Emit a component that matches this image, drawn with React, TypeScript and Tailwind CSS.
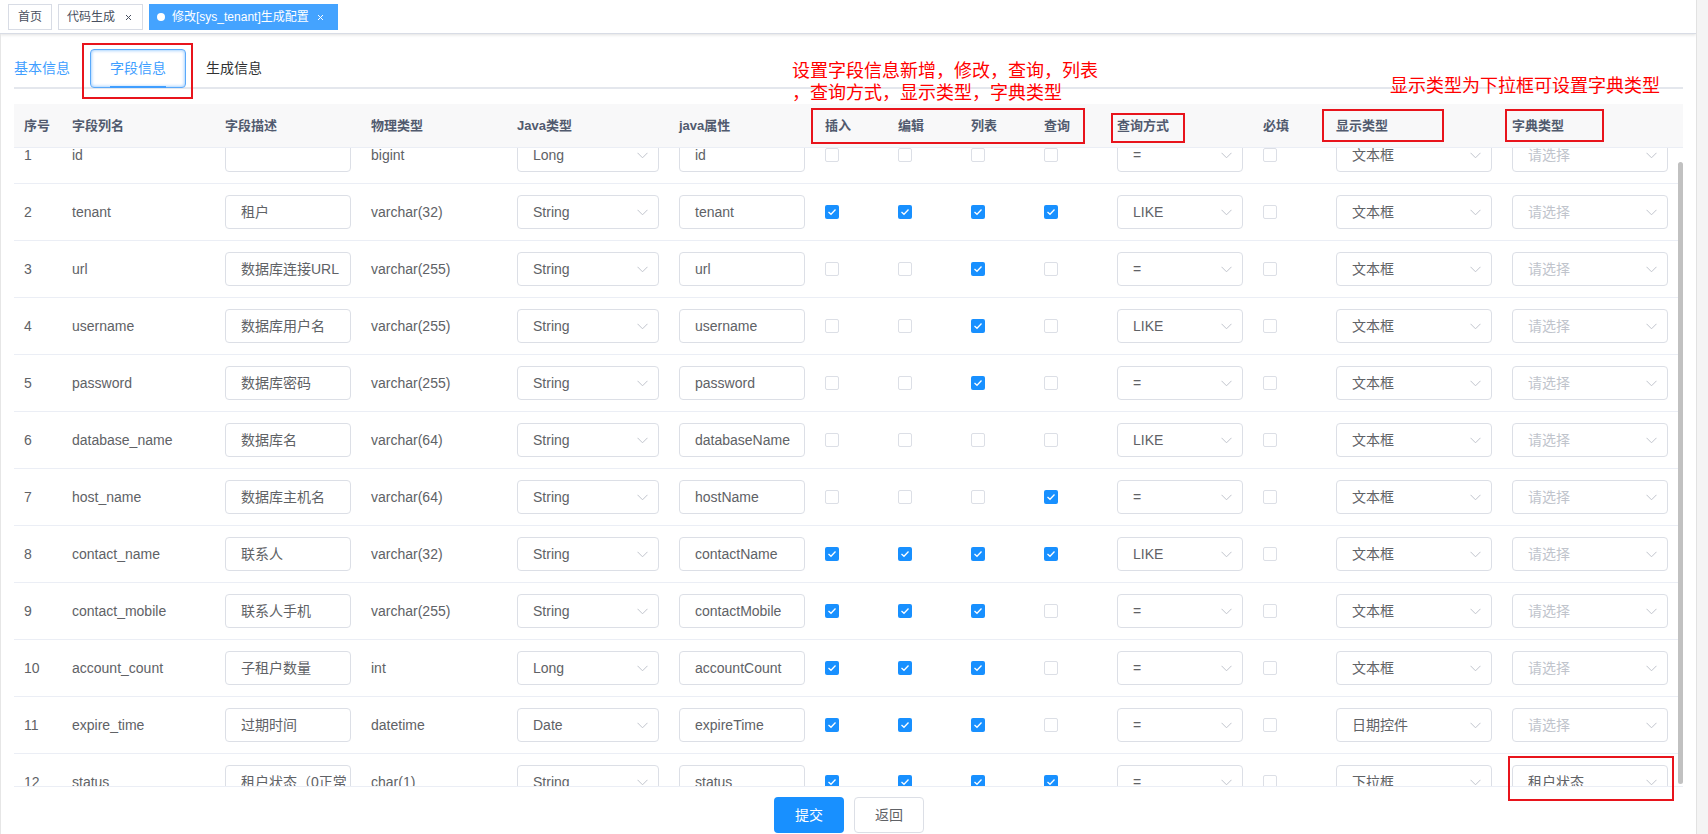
import React from "react";

type Row = {
  name: string;
  desc: string;
  dbType: string;
  javaType: string;
  javaField: string;
  checks: [boolean, boolean, boolean, boolean];
  query: string;
  html: string;
  dict: string;
};

const rows: Row[] = [
  { name: "id", desc: "", dbType: "bigint", javaType: "Long", javaField: "id", checks: [false, false, false, false], query: "=", html: "文本框", dict: "" },
  { name: "tenant", desc: "租户", dbType: "varchar(32)", javaType: "String", javaField: "tenant", checks: [true, true, true, true], query: "LIKE", html: "文本框", dict: "" },
  { name: "url", desc: "数据库连接URL", dbType: "varchar(255)", javaType: "String", javaField: "url", checks: [false, false, true, false], query: "=", html: "文本框", dict: "" },
  { name: "username", desc: "数据库用户名", dbType: "varchar(255)", javaType: "String", javaField: "username", checks: [false, false, true, false], query: "LIKE", html: "文本框", dict: "" },
  { name: "password", desc: "数据库密码", dbType: "varchar(255)", javaType: "String", javaField: "password", checks: [false, false, true, false], query: "=", html: "文本框", dict: "" },
  { name: "database_name", desc: "数据库名", dbType: "varchar(64)", javaType: "String", javaField: "databaseName", checks: [false, false, false, false], query: "LIKE", html: "文本框", dict: "" },
  { name: "host_name", desc: "数据库主机名", dbType: "varchar(64)", javaType: "String", javaField: "hostName", checks: [false, false, false, true], query: "=", html: "文本框", dict: "" },
  { name: "contact_name", desc: "联系人", dbType: "varchar(32)", javaType: "String", javaField: "contactName", checks: [true, true, true, true], query: "LIKE", html: "文本框", dict: "" },
  { name: "contact_mobile", desc: "联系人手机", dbType: "varchar(255)", javaType: "String", javaField: "contactMobile", checks: [true, true, true, false], query: "=", html: "文本框", dict: "" },
  { name: "account_count", desc: "子租户数量", dbType: "int", javaType: "Long", javaField: "accountCount", checks: [true, true, true, false], query: "=", html: "文本框", dict: "" },
  { name: "expire_time", desc: "过期时间", dbType: "datetime", javaType: "Date", javaField: "expireTime", checks: [true, true, true, false], query: "=", html: "日期控件", dict: "" },
  { name: "status", desc: "租户状态（0正常 1停用）", dbType: "char(1)", javaType: "String", javaField: "status", checks: [true, true, true, true], query: "=", html: "下拉框", dict: "租户状态" },
];

const cols =
  "grid grid-cols-[48px_153px_146px_146px_162px_146px_73px_73px_73px_73px_146px_73px_176px_176px]";

const headers = ["序号", "字段列名", "字段描述", "物理类型", "Java类型", "java属性", "插入", "编辑", "列表", "查询", "查询方式", "必填", "显示类型", "字典类型"];

function Chevron() {
  return (
    <svg width="11" height="7" viewBox="0 0 11 7" className="shrink-0">
      <polyline points="0.5,0.8 5.5,5.8 10.5,0.8" fill="none" stroke="#c0c4cc" strokeWidth="1" />
    </svg>
  );
}

function Box({ value }: { value: string }) {
  return (
    <div className="h-[34px] w-full border border-[#dcdfe6] rounded-[4px] bg-white px-[15px] flex items-center text-[14px] text-[#606266] whitespace-nowrap overflow-hidden">
      {value}
    </div>
  );
}

function Select({ value, placeholder }: { value: string; placeholder?: string }) {
  return (
    <div className="h-[34px] w-full border border-[#dcdfe6] rounded-[4px] bg-white pl-[15px] pr-[10px] flex items-center justify-between text-[14px] whitespace-nowrap overflow-hidden">
      <span className={value ? "text-[#606266]" : "text-[#c0c4cc]"}>{value || placeholder}</span>
      <Chevron />
    </div>
  );
}

function Check({ on }: { on: boolean }) {
  if (on) {
    return (
      <div className="w-[14px] h-[14px] rounded-[2px] bg-[#1890ff] flex items-center justify-center">
        <svg width="10" height="8" viewBox="0 0 10 8">
          <polyline points="1.5,4 4,6.3 8.5,1.5" fill="none" stroke="#fff" strokeWidth="1.3" />
        </svg>
      </div>
    );
  }
  return <div className="w-[14px] h-[14px] rounded-[2px] border border-[#dcdfe6] bg-white" />;
}

function Cell({ children }: { children: React.ReactNode }) {
  return <div className="flex items-center px-[10px] overflow-hidden whitespace-nowrap">{children}</div>;
}

function TableRow({ row, index }: { row: Row; index: number }) {
  return (
    <div className={`${cols} shrink-0 h-[57px] border-b border-[#ebeef5] text-[14px] text-[#606266]`}>
      <Cell>{index + 1}</Cell>
      <Cell>{row.name}</Cell>
      <Cell><Box value={row.desc} /></Cell>
      <Cell>{row.dbType}</Cell>
      <Cell><Select value={row.javaType} /></Cell>
      <Cell><Box value={row.javaField} /></Cell>
      {row.checks.map((c, i) => (
        <Cell key={i}><Check on={c} /></Cell>
      ))}
      <Cell><Select value={row.query} /></Cell>
      <Cell><Check on={false} /></Cell>
      <Cell><Select value={row.html} /></Cell>
      <Cell><Select value={row.dict} placeholder="请选择" /></Cell>
    </div>
  );
}

function CloseX({ color }: { color: string }) {
  return (
    <svg width="7" height="7" viewBox="0 0 7 7" className="shrink-0">
      <path d="M1 1L6 6M6 1L1 6" stroke={color} strokeWidth="1" />
    </svg>
  );
}

export default function App() {
  return (
    <div
      className="relative w-[1708px] h-[834px] overflow-hidden flex bg-white"
      style={{ fontFamily: '"Liberation Sans", "Noto Sans CJK SC", Arial, sans-serif' }}
    >
      <div className="flex-1 flex flex-col min-w-0">
        {/* tags view */}
        <div className="h-[34px] shrink-0 border-b border-[#d8dce5] shadow-[0_1px_3px_0_rgba(0,0,0,0.12)] flex items-start pt-[4px] pl-[8px] gap-[6px] bg-white">
          <div className="h-[26px] border border-[#d8dce5] px-[9px] flex items-center text-[12px] text-[#495060]">首页</div>
          <div className="h-[26px] border border-[#d8dce5] pl-[8px] pr-[10px] flex items-center gap-[10px] text-[12px] text-[#495060]">
            代码生成
            <CloseX color="#495060" />
          </div>
          <div className="h-[26px] bg-[#44a3ff] pl-[8px] pr-[14px] flex items-center gap-[7px] text-[12px] text-white">
            <span className="w-[8px] h-[8px] rounded-full bg-white" />
            <span className="mr-[1px]">修改[sys_tenant]生成配置</span>
            <CloseX color="#ffffff" />
          </div>
        </div>

        {/* main */}
        <div className="flex-1 flex flex-col border-l border-[#e6e6e6] pl-[13px] pr-[13px] pt-[15px] min-h-0">
          {/* tabs */}
          <div className="h-[40px] shrink-0 flex border-b-2 border-[#e4e7ed] text-[14px]">
            <div className="pr-[20px] flex items-center text-[#409eff]">基本信息</div>
            <div className="relative px-[19px] flex items-center text-[#409eff] border border-[#5aa9fa] rounded-[4px] shadow-[inset_0_0_3px_1px_rgba(64,158,255,0.45)] -mb-[1px]">
              字段信息
              <div className="absolute left-[19px] right-[19px] bottom-[-1px] h-[2px] bg-[#409eff]" />
            </div>
            <div className="px-[20px] flex items-center text-[#303133]">生成信息</div>
          </div>

          {/* table */}
          <div className="mt-[15px] flex flex-col shrink-0">
            <div className="flex bg-[#f8f8f9] border-b border-[#ebeef5]">
              <div className={`${cols} h-[43px] text-[13px] font-bold text-[#515a6e]`}>
                {headers.map((h) => (
                  <div key={h} className="flex items-center px-[10px] whitespace-nowrap">{h}</div>
                ))}
              </div>
              <div className="w-[5px]" />
            </div>
            <div className="flex items-start h-[639px] overflow-hidden border-b border-[#ebeef5]">
              <div className="flex flex-col shrink-0 mt-[-21px]">
                {rows.map((r, i) => (
                  <TableRow key={r.name} row={r} index={i} />
                ))}
              </div>
              <div className="w-[5px] pt-[14px]">
                <div className="h-[622px] w-[5px] rounded-[3px] bg-[#c1c1c1]" />
              </div>
            </div>
          </div>

          {/* footer */}
          <div className="flex justify-center gap-[10px] pt-[10px] pl-[1px]">
            <div className="w-[70px] h-[36px] rounded-[4px] bg-[#1890ff] text-white text-[14px] flex items-center justify-center">提交</div>
            <div className="w-[70px] h-[36px] rounded-[4px] border border-[#dcdfe6] bg-white text-[#606266] text-[14px] flex items-center justify-center">返回</div>
          </div>
        </div>
      </div>
      <div className="w-[12px] shrink-0 bg-[#f4f4f4] border-l border-[#e2e2e2]" />

      {/* annotations */}
      <div className="absolute left-[792px] top-[60px] text-[18px] leading-[22px] text-[#ff0000] whitespace-nowrap">
        设置字段信息新增，修改，查询，列表
        <br />
        ，查询方式，显示类型，字典类型
      </div>
      <div className="absolute left-[1390px] top-[75px] text-[18px] leading-[22px] text-[#ff0000] whitespace-nowrap">
        显示类型为下拉框可设置字典类型
      </div>
      <div className="absolute left-[82px] top-[43px] w-[111px] h-[56px] border-2 border-[#e8141c]" />
      <div className="absolute left-[811px] top-[108px] w-[274px] h-[36px] border-2 border-[#e8141c]" />
      <div className="absolute left-[1111px] top-[113px] w-[74px] h-[30px] border-2 border-[#e8141c]" />
      <div className="absolute left-[1322px] top-[109px] w-[122px] h-[33px] border-2 border-[#e8141c]" />
      <div className="absolute left-[1505px] top-[109px] w-[99px] h-[33px] border-2 border-[#e8141c]" />
      <div className="absolute left-[1508px] top-[756px] w-[166px] h-[45px] border-2 border-[#e8141c]" />
    </div>
  );
}
